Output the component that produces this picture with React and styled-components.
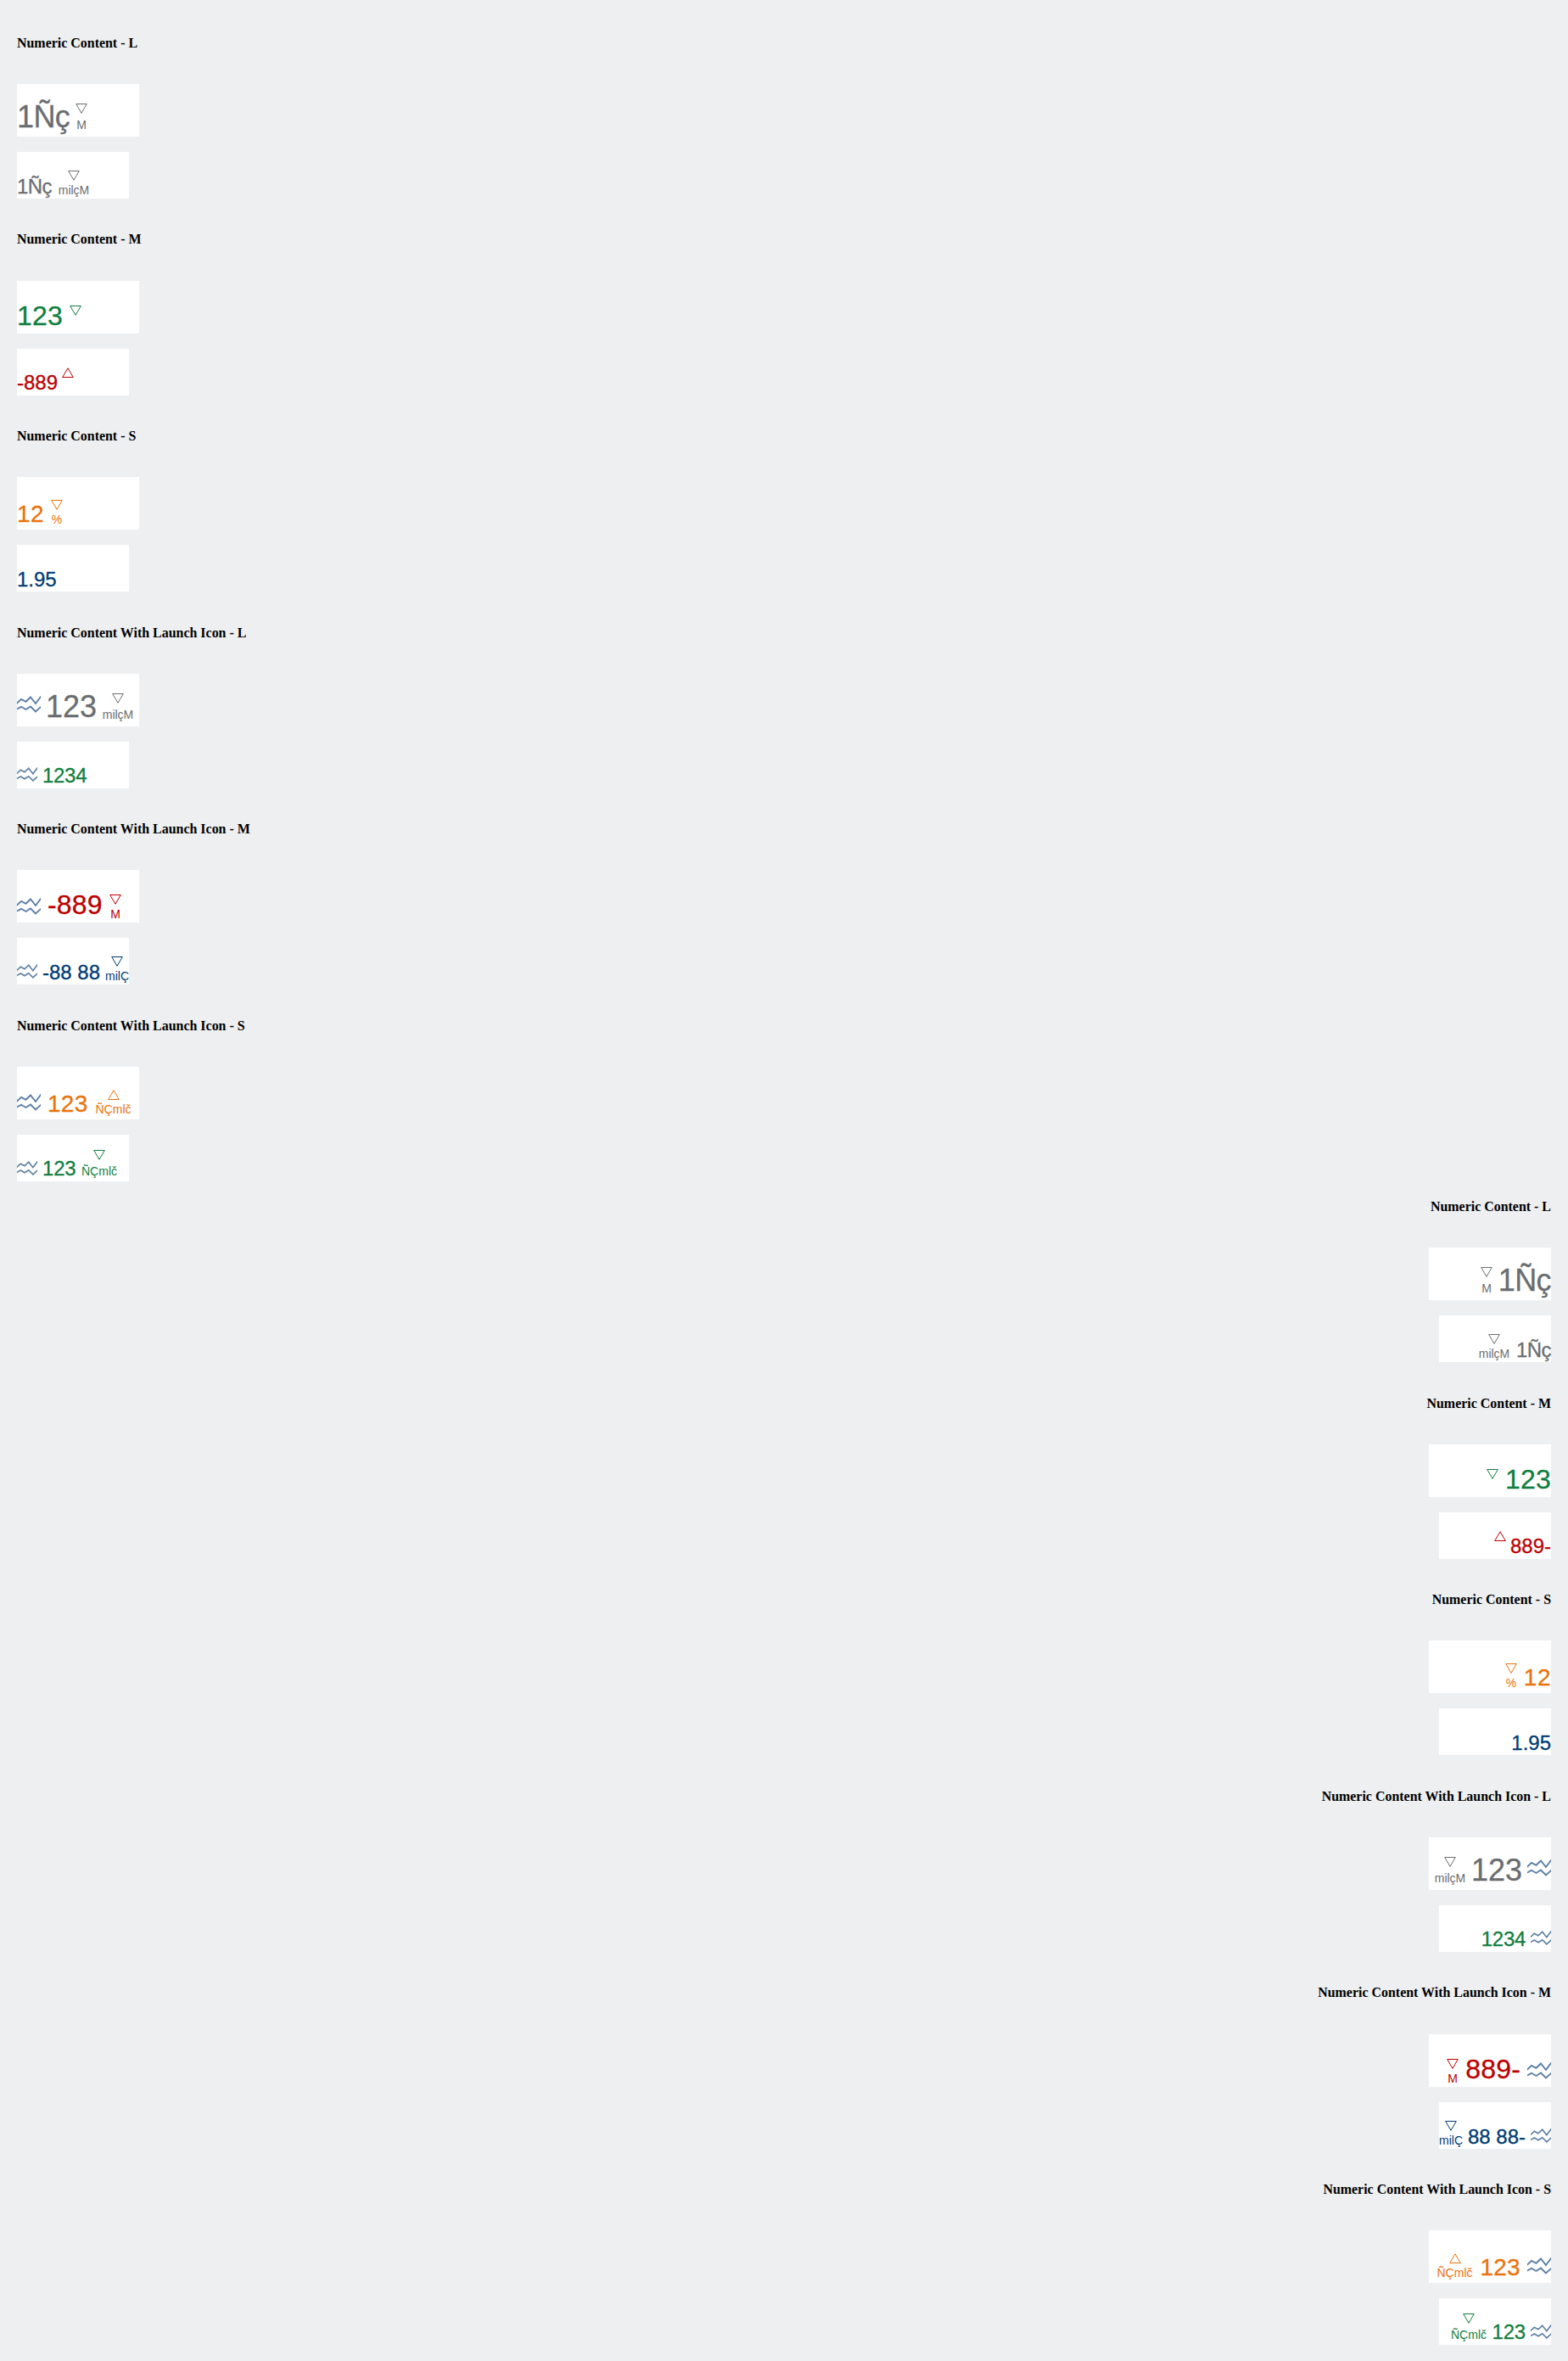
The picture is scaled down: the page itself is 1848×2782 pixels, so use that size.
import React from "react";
import styled, { createGlobalStyle } from "styled-components";

const GlobalStyle = createGlobalStyle`
  body { margin: 0; background: #edeff0; }
`;

const Page = styled.main`
  padding: 2.4px 20px 18.6px;
  min-height: 2761px;
`;

const Group = styled.div`
  direction: ${(p) => p.$dir};
  margin-top: ${(p) => (p.$dir === "rtl" ? "-18.4px" : "0")};
`;

const Section = styled.section`
  padding-top: 39.4px;
`;

const Heading = styled.h4`
  margin: 0 0 38.8px;
  font: bold 15.95px/18.4px "Liberation Serif", "Times New Roman", serif;
  color: #000;
`;

const Tile = styled.div`
  display: flex;
  align-items: flex-start;
  box-sizing: border-box;
  background: #fff;
  color: ${(p) => p.$color};
  width: ${(p) => (p.$small ? 132 : 144)}px;
  height: ${(p) => (p.$small ? 55 : 62)}px;
  margin-bottom: ${(p) => (p.$small ? 0 : 18)}px;
  font-family: "Liberation Sans", Arial, sans-serif;
`;

const LaunchIcon = styled.svg`
  flex: none;
  display: block;
  overflow: hidden;
  width: ${(p) => p.$size}px;
  height: ${(p) => p.$size}px;
  margin-top: ${(p) => p.$top}px;
  margin-inline-end: 6px;
`;

const Value = styled.div`
  flex: none;
  white-space: nowrap;
  width: ${(p) => p.$width}px;
  margin-top: ${(p) => p.$top}px;
  padding-inline-start: ${(p) => p.$inset || 0}px;
  font-size: ${(p) => p.$size}px;
  line-height: ${(p) => p.$size}px;
  letter-spacing: ${(p) => p.$tracking || 0}px;
  -webkit-text-stroke: 0.3px currentColor;
`;

const Unit = styled.div`
  flex: none;
  display: flex;
  flex-direction: column;
  align-items: center;
  width: ${(p) => p.$width}px;
  margin-top: ${(p) => p.$top}px;
`;

const Arrow = styled.svg`
  display: block;
  width: 14px;
  height: 12px;
`;

const Label = styled.span`
  font-size: 14px;
  line-height: 16px;
  margin-top: ${(p) => p.$gap}px;
  white-space: nowrap;
`;

const colors = {
  neutral: "#6a6d70",
  good: "#107e3e",
  error: "#bb0000",
  critical: "#e9730c",
  brand: "#003b73",
};

const sections = [
  {
    title: "Numeric Content - L",
    tiles: [
      { color: "neutral", text: "1Ñç", size: 36, top: 21, tracking: -0.6, width: 69, dir: "down", unit: "M", unitTop: 23, unitWidth: 14, gap: 5 },
      { color: "neutral", text: "1Ñç", size: 24, top: 29, tracking: -0.6, width: 48, dir: "down", unit: "milçM", unitTop: 22, unitWidth: 38, gap: 3 },
    ],
  },
  {
    title: "Numeric Content - M",
    tiles: [
      { color: "good", text: "123", size: 32, top: 25, tracking: 0.2, width: 62, dir: "down", unitTop: 29, unitWidth: 14 },
      { color: "error", text: "-889", size: 24, top: 28, width: 53, dir: "up", unitTop: 22, unitWidth: 14 },
    ],
  },
  {
    title: "Numeric Content - S",
    tiles: [
      { color: "critical", text: "12", size: 28, top: 30, tracking: 0.5, width: 40, dir: "down", unit: "%", unitTop: 27, unitWidth: 14, gap: 3 },
      { color: "brand", text: "1.95", size: 24, top: 29, width: 53 },
    ],
  },
  {
    title: "Numeric Content With Launch Icon - L",
    tiles: [
      { color: "neutral", icon: 26, text: "123", size: 36, top: 21, width: 66, dir: "down", unit: "milçM", unitTop: 23, unitWidth: 38, gap: 5 },
      { color: "good", icon: 30, text: "1234", size: 24, top: 28, tracking: -0.3, width: 60 },
    ],
  },
  {
    title: "Numeric Content With Launch Icon - M",
    tiles: [
      { color: "error", icon: 33, text: "-889", size: 32, top: 25, tracking: 0.2, inset: 2, width: 73, dir: "down", unit: "M", unitTop: 29, unitWidth: 14, gap: 3 },
      { color: "brand", icon: 31, text: "-88 88", size: 24, top: 29, width: 74, dir: "down", unit: "milÇ", unitTop: 22, unitWidth: 28, gap: 3 },
    ],
  },
  {
    title: "Numeric Content With Launch Icon - S",
    tiles: [
      { color: "critical", icon: 32, text: "123", size: 28, top: 30, tracking: 0.3, inset: 2, width: 56, dir: "up", unit: "ÑÇmlč", unitTop: 27, unitWidth: 43, gap: 3 },
      { color: "good", icon: 31, text: "123", size: 24, top: 28, tracking: -0.2, width: 46, dir: "down", unit: "ÑÇmlč", unitTop: 18, unitWidth: 42, gap: 5 },
    ],
  },
];

function Waves({ top, size }) {
  return (
    <LaunchIcon $top={top} $size={size} viewBox="0 0 28 28" fill="none" stroke="#5b7fa5" strokeWidth="1.9">
      <path d="M-.5 9 5 3.8 10.5 6.8 16 1.5 22 9 28.5 .3" />
      <path d="M-.5 15.8 5 12.8 10.5 16 16 12.5 22 18.5 28.5 12.6" />
    </LaunchIcon>
  );
}

function NumericTile({ tile, small }) {
  return (
    <Tile $small={small} $color={colors[tile.color]}>
      {tile.icon && <Waves top={tile.icon} size={small ? 24 : 28} />}
      <Value $size={tile.size} $top={tile.top} $width={tile.width} $inset={tile.inset} $tracking={tile.tracking}>
        {tile.text}
      </Value>
      {tile.dir && (
        <Unit $top={tile.unitTop} $width={tile.unitWidth}>
          <Arrow viewBox="0 0 14 12" fill="none" stroke="currentColor">
            <path d={tile.dir === "down" ? "M.7 .5H13.3L7 11.3Z" : "M.7 11.5H13.3L7 .8Z"} />
          </Arrow>
          {tile.unit && <Label $gap={tile.gap}>{tile.unit}</Label>}
        </Unit>
      )}
    </Tile>
  );
}

export default function App() {
  return (
    <Page>
      <GlobalStyle />
      {["ltr", "rtl"].map((dir) => (
        <Group key={dir} $dir={dir}>
          {sections.map((section) => (
            <Section key={section.title}>
              <Heading>{section.title}</Heading>
              {section.tiles.map((tile, i) => (
                <NumericTile key={i} tile={tile} small={i === 1} />
              ))}
            </Section>
          ))}
        </Group>
      ))}
    </Page>
  );
}
